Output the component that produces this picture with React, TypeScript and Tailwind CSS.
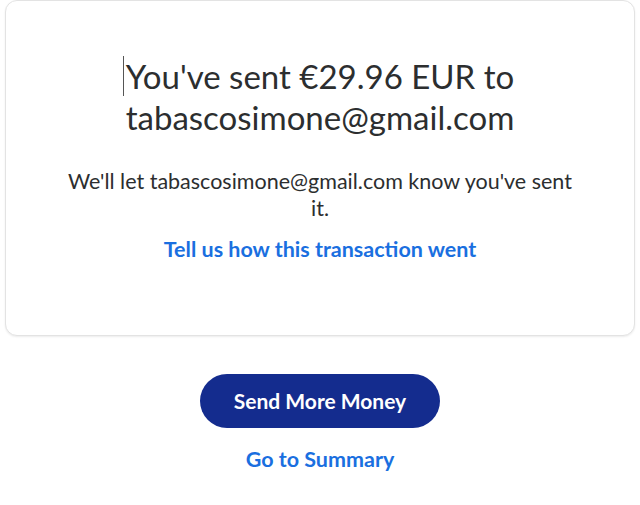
export default function App() {
  return (
    <div className="min-h-[505px] w-full bg-white font-['Lato','Open_Sans',sans-serif] text-[#2c2e2f]">
      <div className="mx-[5px] rounded-xl border border-[#e3e3e3] bg-white px-10 pt-[55px] pb-[72px] text-center shadow-[0_1px_2px_rgba(0,0,0,0.08)]">
        <h1 className="text-[33px] leading-[41px] font-normal">
          <span className="relative">
            <span className="absolute -left-[3px] top-0 h-[40px] w-px bg-[#555]" />
            You've sent €29.96 EUR to
          </span>
          <br />
          tabascosimone@gmail.com
        </h1>
        <p className="mx-auto mt-[30px] max-w-[515px] text-[21.5px] leading-[27px]">
          We'll let tabascosimone@gmail.com know you've sent it.
        </p>
        <a href="#" className="mt-[14px] inline-block text-[21.5px] leading-[27px] font-bold text-[#1a6fe0]">
          Tell us how this transaction went
        </a>
      </div>
      <div className="mt-[38px] flex flex-col items-center">
        <button className="h-[54px] w-[240px] rounded-full bg-[#142c8e] text-[21px] font-bold text-white">
          Send More Money
        </button>
        <a href="#" className="mt-[18px] text-[21.5px] leading-[27px] font-bold text-[#1a6fe0]">
          Go to Summary
        </a>
      </div>
    </div>
  );
}
